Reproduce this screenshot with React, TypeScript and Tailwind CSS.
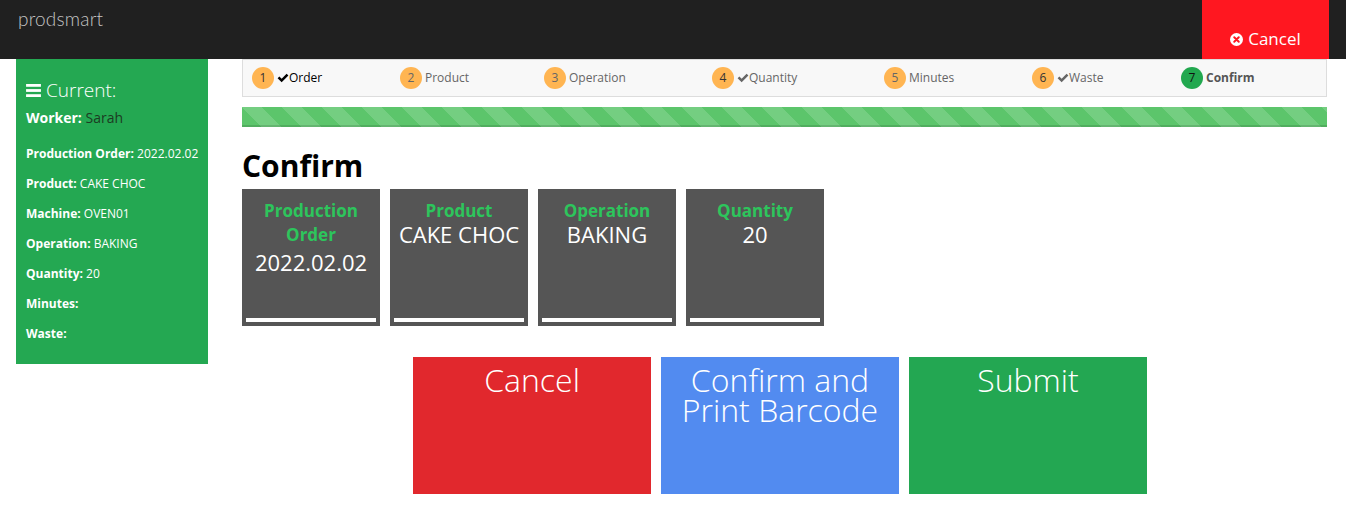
import React from "react";

const steps = [
  { n: "1", label: "Order", check: true, w: "w-[148px]", state: "done" },
  { n: "2", label: "Product", check: false, w: "w-[144px]", state: "todo" },
  { n: "3", label: "Operation", check: false, w: "w-[168px]", state: "todo" },
  { n: "4", label: "Quantity", check: true, w: "w-[172px]", state: "todo" },
  { n: "5", label: "Minutes", check: false, w: "w-[148px]", state: "todo" },
  { n: "6", label: "Waste", check: true, w: "w-[149px]", state: "todo" },
  { n: "7", label: "Confirm", check: false, w: "flex-1", state: "active" },
];

const Check = ({ className }: { className: string }) => (
  <svg viewBox="0 0 16 16" className={className} fill="currentColor">
    <path d="M0.8 8.4 L3.2 6.0 L6.2 9.0 L12.8 2.4 L15.2 4.8 L6.2 13.8 Z" />
  </svg>
);

const info = [
  { k: "Production Order", v: "2022.02.02" },
  { k: "Product", v: "CAKE CHOC" },
  { k: "Machine", v: "OVEN01" },
  { k: "Operation", v: "BAKING" },
  { k: "Quantity", v: "20" },
  { k: "Minutes", v: "" },
  { k: "Waste", v: "" },
];

const cards = [
  { t: ["Production", "Order"], v: "2022.02.02" },
  { t: ["Product"], v: "CAKE CHOC" },
  { t: ["Operation"], v: "BAKING" },
  { t: ["Quantity"], v: "20" },
];

export default function App() {
  return (
    <div className="w-[1346px] h-[513px] bg-white font-['Open_Sans',sans-serif] overflow-hidden">
      {/* header */}
      <div className="h-[59px] bg-[#202020] flex items-start">
        <div className="ml-[18px] mt-[6px] text-[19px] leading-[26px] text-[#c4c4c4] font-['Lato',sans-serif] font-light tracking-[0.2px]">
          prodsmart
        </div>
        <div className="ml-auto mr-[17px] w-[127px] h-[59px] bg-[#ff1720] flex items-end justify-center pb-[9px]">
          <div className="flex items-center gap-[5px] text-white text-[17px] leading-[22px]">
            <svg viewBox="0 0 16 16" className="w-[13px] h-[13px]">
              <circle cx="8" cy="8" r="8" fill="white" />
              <path d="M5.2 5.2 L10.8 10.8 M10.8 5.2 L5.2 10.8" stroke="#ff1720" strokeWidth="2.4" strokeLinecap="round" />
            </svg>
            <span>Cancel</span>
          </div>
        </div>
      </div>

      <div className="flex items-start">
        {/* sidebar */}
        <div className="ml-[16px] w-[192px] h-[305px] bg-[#24a852] pl-[10px] pt-[18px] text-white">
          <div className="flex items-center gap-[5px] h-[26px]">
            <svg viewBox="0 0 16 14" className="w-[15px] h-[13px]" fill="white">
              <rect x="0" y="0" width="16" height="3" />
              <rect x="0" y="5.5" width="16" height="3" />
              <rect x="0" y="11" width="16" height="3" />
            </svg>
            <span className="text-[19px] font-light leading-[26px]">Current:</span>
          </div>
          <div className="mt-[5px] text-[14px] leading-[20px]">
            <span className="font-bold">Worker:</span>{" "}
            <span className="text-[#1c3b22]">Sarah</span>
          </div>
          <div className="mt-[11px]">
            {info.map((r) => (
              <div key={r.k} className="h-[30px] flex items-center text-[12px] leading-[16px]">
                <span className="font-bold">{r.k}:</span>
                {r.v && <span>&nbsp;{r.v}</span>}
              </div>
            ))}
          </div>
        </div>

        {/* main */}
        <div className="ml-[34px] w-[1085px]">
          <div className="h-[38px] bg-[#f8f8f8] border border-[#dddddd] flex items-center pl-[9px]">
            {steps.map((s) => (
              <div key={s.n} className={`${s.w} flex items-center`}>
                <div
                  className={`w-[22px] h-[22px] rounded-full flex items-center justify-center text-[12px] leading-none ${
                    s.state === "active" ? "bg-[#22a84f] text-[#111]" : "bg-[#ffb552] text-[#333]"
                  } ${s.state === "todo" && !s.check ? "text-[#666]" : ""}`}
                >
                  {s.n}
                </div>
                <div
                  className={`ml-[3px] flex items-center text-[12px] leading-[16px] ${
                    s.state === "done" ? "text-black" : s.state === "active" ? "text-[#555] font-bold" : "text-[#666]"
                  }`}
                >
                  {s.check && <Check className="w-[12px] h-[12px]" />}
                  <span>{s.label}</span>
                </div>
              </div>
            ))}
          </div>

          <div className="mt-[10px] h-[20px] bg-[#5cc56b] bg-[linear-gradient(45deg,rgba(255,255,255,.15)_25%,transparent_25%,transparent_50%,rgba(255,255,255,.15)_50%,rgba(255,255,255,.15)_75%,transparent_75%,transparent)] bg-[length:40px_40px] shadow-[inset_0_-2px_0_rgba(0,0,0,0.12)]" />

          <h1 className="mt-[20px] text-[30px] leading-[38px] font-bold text-black">Confirm</h1>

          <div className="mt-[4px] flex gap-[10px]">
            {cards.map((c) => (
              <div key={c.v} className="w-[138px] h-[137px] bg-[#555555] flex flex-col items-center pt-[10px]">
                {c.t.map((t) => (
                  <div key={t} className="text-[17px] leading-[24px] font-bold text-[#2dc55c]">
                    {t}
                  </div>
                ))}
                <div
                  className={`text-[22px] leading-[22px] text-white whitespace-nowrap ${
                    c.t.length > 1 ? "mt-[4px]" : ""
                  }`}
                >
                  {c.v}
                </div>
                <div className="mt-auto mb-[4px] self-stretch mx-[4px] h-[4px] bg-white" />
              </div>
            ))}
          </div>

          <div className="mt-[31px] ml-[171px] flex gap-[10px]">
            <div className="w-[238px] h-[137px] bg-[#e1282d] text-white text-center text-[32px] font-light leading-[30px] pt-[8px]">
              Cancel
            </div>
            <div className="w-[238px] h-[137px] bg-[#528bf0] text-white text-center text-[32px] font-light leading-[30px] pt-[8px]">
              Confirm and
              <br />
              Print Barcode
            </div>
            <div className="w-[238px] h-[137px] bg-[#23a752] text-white text-center text-[32px] font-light leading-[30px] pt-[8px]">
              Submit
            </div>
          </div>
        </div>
      </div>
    </div>
  );
}
